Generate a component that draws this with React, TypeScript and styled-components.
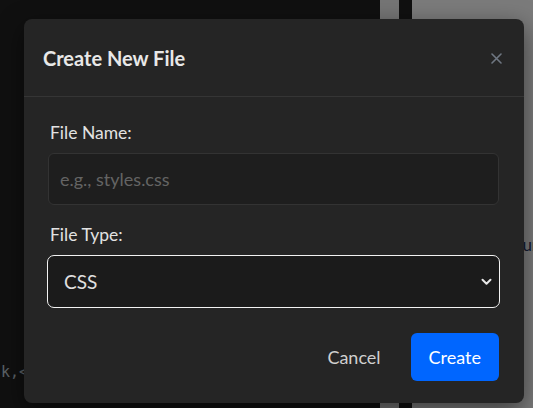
import React from 'react';
import styled, { createGlobalStyle } from 'styled-components';

const Global = createGlobalStyle`
  html, body { margin: 0; padding: 0; background: #101010; }
  body { font-family: Lato, "Noto Sans", sans-serif; }
  * { box-sizing: border-box; }
`;

const Screen = styled.div`
  position: relative;
  width: 533px;
  height: 408px;
  overflow: hidden;
  display: flex;
`;

const EditorPane = styled.div`
  flex: 0 0 380px;
  background: #202020;
  display: flex;
  flex-direction: column;
  justify-content: flex-end;
  padding: 0 0 26px 1px;
`;

const CodeLine = styled.div`
  font-family: "DejaVu Sans Mono", monospace;
  font-size: 15px;
  line-height: 20px;
  color: #b8c4cf;
`;

const ScrollStrip = styled.div`
  flex: 0 0 19px;
  background: #ebebeb;
`;

const Divider = styled.div`
  flex: 0 0 13px;
  background: #202020;
`;

const SidePanel = styled.div`
  flex: 1 1 auto;
  min-width: 0;
  overflow: hidden;
  background: #f6f6f6;
  padding: 234px 0 0 92px;
  font-size: 17px;
  color: #2a3a66;
  white-space: nowrap;
`;

const Overlay = styled.div`
  position: absolute;
  inset: 0;
  background: rgba(0, 0, 0, 0.5);
  display: flex;
  align-items: flex-start;
  padding: 19px 0 0 24px;
`;

const Modal = styled.div`
  width: 500px;
  background: #252525;
  border-radius: 8px;
  box-shadow: 0 8px 24px rgba(0, 0, 0, 0.5);
  color: #e6e6e6;
`;

const Header = styled.div`
  display: flex;
  align-items: center;
  justify-content: space-between;
  padding: 24px 21px 23px 19px;
  border-bottom: 1px solid #353535;
`;

const Title = styled.h2`
  margin: 0;
  font-size: 20px;
  line-height: 30px;
  font-weight: 700;
  color: #e8e8e8;
`;

const CloseButton = styled.button`
  border: 0;
  background: none;
  padding: 0;
  width: 14px;
  height: 14px;
  display: flex;
  align-items: center;
  justify-content: center;
  cursor: pointer;
`;

const Body = styled.div`
  padding: 24px 25px 0 24px;
  display: flex;
  flex-direction: column;
`;

const Field = styled.div<{ $last?: boolean }>`
  display: flex;
  flex-direction: column;
  gap: 8px;
  margin-bottom: ${(p) => (p.$last ? '0' : '18px')};
`;

const Label = styled.label`
  font-size: 17.5px;
  line-height: 24px;
  color: #e2e2e2;
  padding-left: 2px;
`;

const TextInput = styled.input`
  width: 100%;
  height: 52px;
  padding: 0 11px;
  font-family: inherit;
  font-size: 18px;
  color: #e0e0e0;
  background: #1e1e1e;
  border: 1px solid #333;
  border-radius: 6px;
  outline: none;
  &::placeholder { color: #646464; }
`;

const SelectWrap = styled.div`
  position: relative;
  margin: 0 -1px;
`;

const Select = styled.select`
  appearance: none;
  width: 100%;
  height: 53px;
  padding: 0 16px;
  font-family: inherit;
  font-size: 19px;
  color: #e0e0e0;
  background: #1b1b1b;
  border: 1.5px solid #f2f2f2;
  border-radius: 7px;
  outline: none;
`;

const Chevron = styled.svg`
  position: absolute;
  right: 8px;
  top: 50%;
  margin-top: -4px;
  pointer-events: none;
`;

const Footer = styled.div`
  display: flex;
  justify-content: flex-end;
  gap: 12px;
  padding: 25px 25px 22px 24px;
`;

const Button = styled.button<{ $primary?: boolean }>`
  height: 48px;
  padding: 0 18px;
  border: 0;
  border-radius: 6px;
  font-family: inherit;
  font-size: 18px;
  cursor: pointer;
  background: ${(p) => (p.$primary ? '#0066ff' : 'transparent')};
  color: ${(p) => (p.$primary ? '#ffffff' : '#d0d0d0')};
`;

export default function App() {
  return (
    <>
      <Global />
      <Screen>
        <EditorPane>
          <CodeLine>k,&lt;</CodeLine>
        </EditorPane>
        <ScrollStrip />
        <Divider />
        <SidePanel>Your output</SidePanel>
        <Overlay>
          <Modal>
            <Header>
              <Title>Create New File</Title>
              <CloseButton aria-label="Close">
                <svg width="11" height="11" viewBox="0 0 11 11">
                  <path d="M1 1L10 10M10 1L1 10" stroke="#6f7782" strokeWidth="1.6" strokeLinecap="round" />
                </svg>
              </CloseButton>
            </Header>
            <Body>
              <Field>
                <Label>File Name:</Label>
                <TextInput placeholder="e.g., styles.css" />
              </Field>
              <Field $last>
                <Label>File Type:</Label>
                <SelectWrap>
                  <Select defaultValue="css">
                    <option value="css">CSS</option>
                    <option value="js">JavaScript</option>
                    <option value="html">HTML</option>
                  </Select>
                  <Chevron width="11" height="8" viewBox="0 0 11 8">
                    <path d="M1.5 1.8L5.5 5.8L9.5 1.8" fill="none" stroke="#e8e8e8" strokeWidth="2" strokeLinecap="round" strokeLinejoin="round" />
                  </Chevron>
                </SelectWrap>
              </Field>
            </Body>
            <Footer>
              <Button>Cancel</Button>
              <Button $primary>Create</Button>
            </Footer>
          </Modal>
        </Overlay>
      </Screen>
    </>
  );
}
